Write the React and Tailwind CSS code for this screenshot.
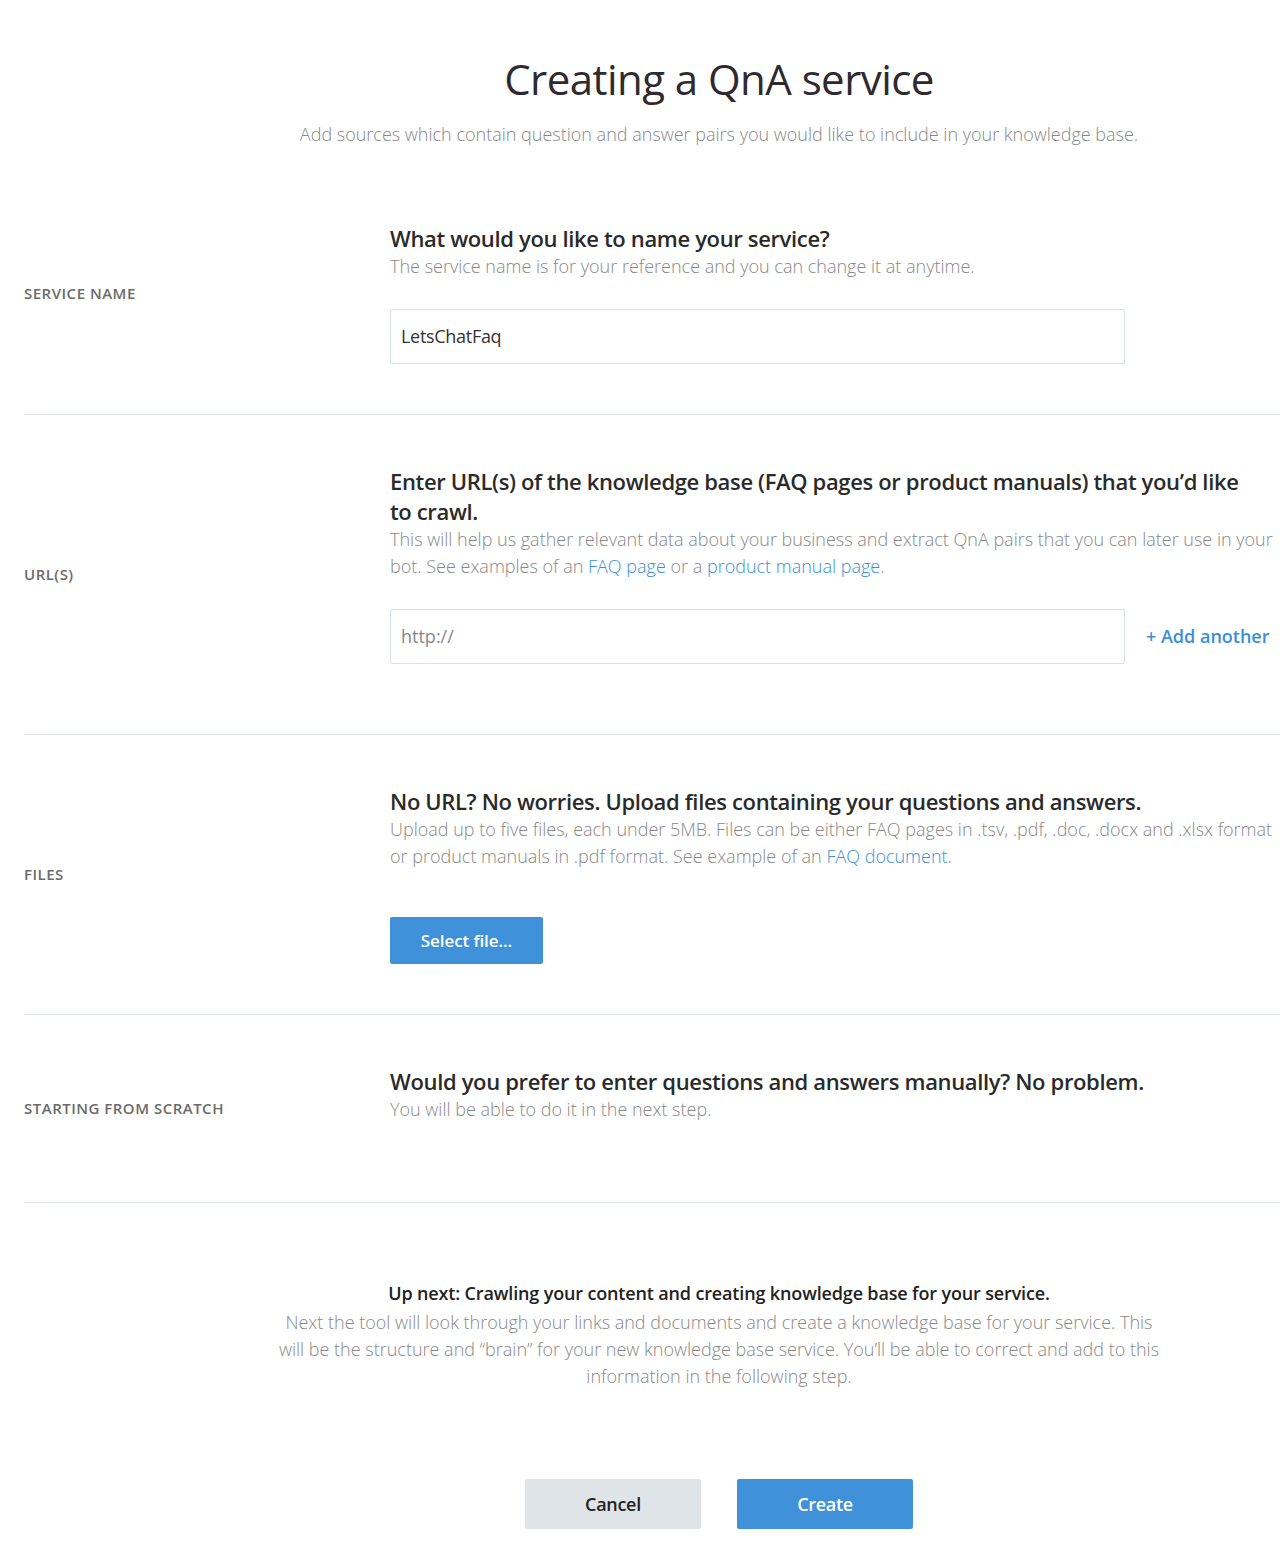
import React from "react";

function Section({ label, children, pb }) {
  return (
    <div className="flex items-center border-b border-[#dde3e8]">
      <div className="w-[366px] shrink-0 text-[15px] font-semibold text-[#6b6b6b] tracking-[0.5px]">{label}</div>
      <div className={`flex-1 pt-[51px] ${pb}`}>{children}</div>
    </div>
  );
}

function Heading({ children }) {
  return <h2 className="text-[22px] leading-[30px] font-semibold text-[#2a2a2a] tracking-[-0.35px] whitespace-nowrap">{children}</h2>;
}

function Desc({ children }) {
  return <p className="text-[18px] leading-[27px] font-light text-[#888] whitespace-nowrap">{children}</p>;
}

const Link = ({ children }) => <a className="text-[#3b8fd9]">{children}</a>;

export default function App() {
  return (
    <div className="min-h-screen bg-white font-['Open_Sans','Noto_Sans',sans-serif]">
      {/* Header */}
      <div className="pl-[158px] pt-[52px] pb-[24px] text-center">
        <h1 className="text-[42px] leading-[53px] text-[#2e2a30] tracking-[-0.55px]">Creating a QnA service</h1>
        <p className="mt-[16px] text-[18px] leading-[27px] font-light text-[#888]">
          Add sources which contain question and answer pairs you would like to include in your knowledge base.
        </p>
      </div>

      <div className="ml-6">
        <Section label="SERVICE NAME" pb="pb-[50px]">
          <Heading>What would you like to name your service?</Heading>
          <Desc>The service name is for your reference and you can change it at anytime.</Desc>
          <div className="mt-[29px] w-[735px] h-[55px] border border-[#d9e1e6] rounded-[2px] flex items-center px-[10px] text-[18px] text-[#333] tracking-[-0.3px]">
            LetsChatFaq
          </div>
        </Section>

        <Section label="URL(S)" pb="pb-[70px]">
          <Heading>
            Enter URL(s) of the knowledge base (FAQ pages or product manuals) that you’d like<br />to crawl.
          </Heading>
          <Desc>
            This will help us gather relevant data about your business and extract QnA pairs that you can later use in your<br />
            bot. See examples of an <Link>FAQ page</Link> or a <Link>product manual page</Link>.
          </Desc>
          <div className="mt-[29px] flex items-center">
            <div className="w-[735px] h-[55px] border border-[#d9e1e6] rounded-[2px] flex items-center px-[10px] text-[18px] text-[#888]">
              http://
            </div>
            <button className="ml-[21px] text-[18px] font-semibold text-[#3b8fd9]">+ Add another</button>
          </div>
        </Section>

        <Section label="FILES" pb="pb-[50px]">
          <Heading>No URL? No worries. Upload files containing your questions and answers.</Heading>
          <Desc>
            Upload up to five files, each under 5MB. Files can be either FAQ pages in .tsv, .pdf, .doc, .docx and .xlsx format<br />
            or product manuals in .pdf format. See example of an <Link>FAQ document</Link>.
          </Desc>
          <button className="mt-[47px] w-[153px] h-[47px] bg-[#3f92d9] rounded-[2px] text-white text-[17px] font-semibold tracking-[-0.1px]">
            Select file...
          </button>
        </Section>

        <Section label="STARTING FROM SCRATCH" pb="pb-[79px]">
          <Heading>Would you prefer to enter questions and answers manually? No problem.</Heading>
          <Desc>You will be able to do it in the next step.</Desc>
        </Section>
      </div>

      {/* Up next */}
      <div className="pl-[158px] pt-[77px] text-center">
        <h3 className="text-[18px] leading-[27px] font-semibold text-[#222] tracking-[-0.15px]">
          Up next: Crawling your content and creating knowledge base for your service.
        </h3>
        <p className="mt-[2px] text-[18px] leading-[27px] font-light text-[#888]">
          Next the tool will look through your links and documents and create a knowledge base for your service. This<br />
          will be the structure and “brain” for your new knowledge base service. You’ll be able to correct and add to this<br />
          information in the following step.
        </p>
        <div className="mt-[89px] pb-[39px] flex justify-center gap-9">
          <button className="w-[176px] h-[50px] rounded-[2px] bg-[#dfe4e8] text-[18px] font-semibold text-[#222] tracking-[-0.3px]">Cancel</button>
          <button className="w-[176px] h-[50px] rounded-[2px] bg-[#3f92d9] text-[18px] font-semibold text-white tracking-[-0.3px]">Create</button>
        </div>
      </div>
    </div>
  );
}
